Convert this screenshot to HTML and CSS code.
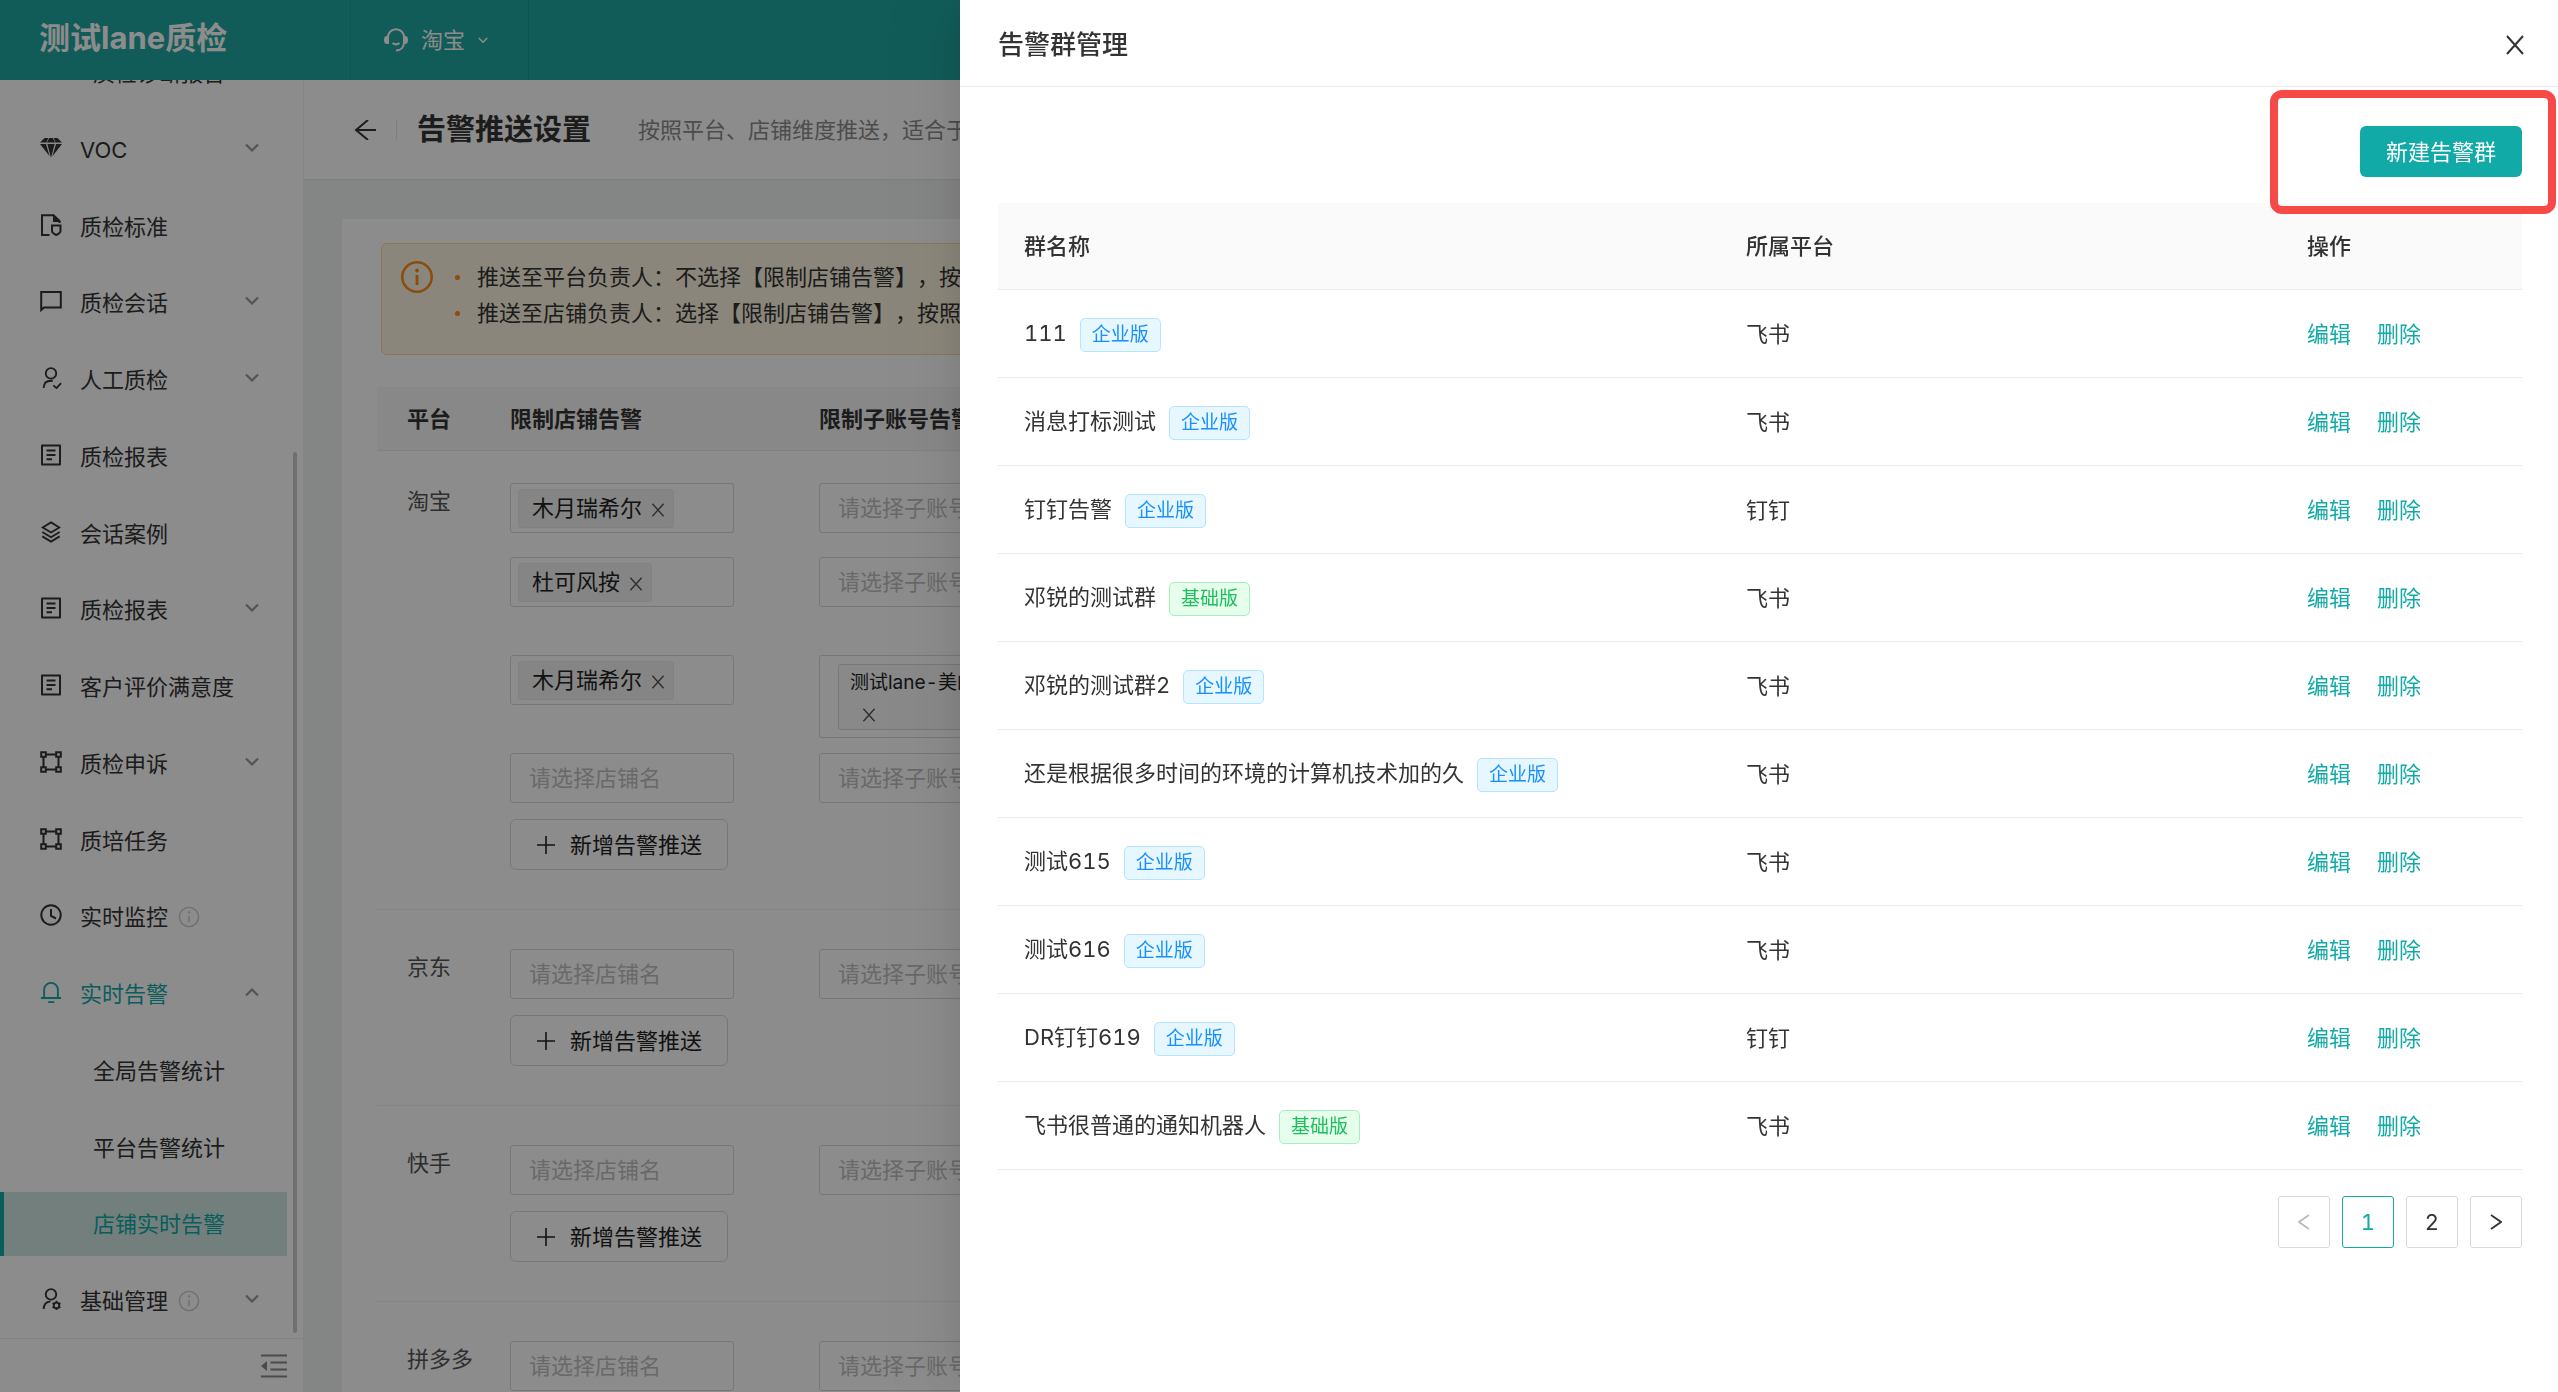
FILE: index.html
```html
<!DOCTYPE html>
<html lang="zh-CN">
<head>
<meta charset="utf-8">
<title>告警推送设置</title>
<link rel="stylesheet" href="styles.css">
</head>
<body>
<svg class="sprite" aria-hidden="true">
  <symbol id="down" viewBox="0 0 14 10"><path d="M1 1.500l6 6 6-6" fill="none" stroke="currentColor" stroke-width="2.200"/></symbol>
  <symbol id="up" viewBox="0 0 14 10"><path d="M1 8.500l6-6 6 6" fill="none" stroke="currentColor" stroke-width="2.200"/></symbol>
  <symbol id="report" viewBox="0 0 22 22"><path d="M2 1.500h18v19H2zM6.500 6.500h9M6.500 11h9M6.500 15.200h5.500" fill="none" stroke="currentColor" stroke-width="2" stroke-linejoin="round"/></symbol>
  <symbol id="frame" viewBox="0 0 22 22"><path d="M1.200 1.200h4.600v4.600H1.200zM16.200 1.200h4.600v4.600h-4.600zM1.200 16.200h4.600v4.600H1.200zM16.200 16.200h4.600v4.600h-4.600zM6 3.500h10M6 18.500h10M3.500 6v10M18.500 6v10" fill="none" stroke="currentColor" stroke-width="2"/></symbol>
  <symbol id="info" viewBox="0 0 24 24"><circle cx="12" cy="12" r="10.500" fill="none" stroke="currentColor" stroke-width="1.600"/><path d="M12 10.500v7" stroke="currentColor" stroke-width="1.700"/><circle cx="12" cy="7" r="1.300" fill="currentColor"/></symbol>
  <symbol id="cross" viewBox="0 0 20 20"><path d="M2 1l16 18M18 1L2 19" fill="none" stroke="currentColor" stroke-width="2"/></symbol>
  <symbol id="plus" viewBox="0 0 20 20"><path d="M10 1v18M1 10h18" fill="none" stroke="currentColor" stroke-width="1.600"/></symbol>
</svg>

<div class="app">
  <header class="topbar">
    <div class="brand">测试lane质检</div>
    <button class="platform" type="button">
      <svg class="headset" viewBox="0 0 24 24"><path d="M4 9.500C4 4.500 7.500 1.200 12 1.200s8 3.300 8 8.300V14c0 5-3 8.500-8 8.500" fill="none" stroke="currentColor" stroke-width="2"/><path d="M5 7.500v8.500H2.500C1 16 0 14.500 0 12s1-4 2.500-4zM19 7.500v8.500h2.500c1.500 0 2.500-1.500 2.500-4s-1-4-2.500-4z" fill="currentColor"/><path d="M8.500 15q3.500 2.800 7 0" fill="none" stroke="currentColor" stroke-width="2"/></svg>
      淘宝
      <svg class="tiny"><use href="#down"/></svg>
    </button>
  </header>

  <div class="layout">
    <aside class="sidebar">
      <nav class="nav">
        <ul class="menu">
          <li><a class="item sub" href="#">质检诊断报告</a></li>
          <li><a class="item" href="#"><svg class="icon" viewBox="0 0 24 22"><path d="M5 0h4L7 5H0zM10 0h4l2.500 5h-9zM15 0h4l5 5h-7zM0 6.500h6.500l4 13.500zM8 6.500h8L12 21.500zM17.500 6.500H24L13.500 20z" fill="currentColor"/></svg><span>VOC</span><svg class="arrow"><use href="#down"/></svg></a></li>
          <li><a class="item" href="#"><svg class="icon" viewBox="0 0 22 22"><path d="M9.500 21H2V1.200h11.500L19.500 7v2" fill="none" stroke="currentColor" stroke-width="2"/><path d="M13 0v8h8z" fill="currentColor"/><path d="M12 11.500h8.500v5.500q0 2-4.200 4-4.300-2-4.300-4z" fill="none" stroke="currentColor" stroke-width="2"/></svg><span>质检标准</span></a></li>
          <li><a class="item" href="#"><svg class="icon" viewBox="0 0 22 22"><path d="M1.200 20V2h19.600v15.500H4z" fill="none" stroke="currentColor" stroke-width="2"/></svg><span>质检会话</span><svg class="arrow"><use href="#down"/></svg></a></li>
          <li><a class="item" href="#"><svg class="icon" viewBox="0 0 22 24"><circle cx="11" cy="7" r="5.700" fill="none" stroke="currentColor" stroke-width="2"/><path d="M3 23c0-5 3-8 8-8h2M13.500 20l3.500 3 5-5.500" fill="none" stroke="currentColor" stroke-width="2"/></svg><span>人工质检</span><svg class="arrow"><use href="#down"/></svg></a></li>
          <li><a class="item" href="#"><svg class="icon"><use href="#report"/></svg><span>质检报表</span></a></li>
          <li><a class="item" href="#"><svg class="icon" viewBox="0 0 22 24"><path d="M11 1.500l9 5.500-9 5.500L2 7zM1.500 12l9.500 5.700 9.500-5.700M1.500 16.800L11 22.500l9.500-5.700" fill="none" stroke="currentColor" stroke-width="2"/></svg><span>会话案例</span></a></li>
          <li><a class="item" href="#"><svg class="icon"><use href="#report"/></svg><span>质检报表</span><svg class="arrow"><use href="#down"/></svg></a></li>
          <li><a class="item" href="#"><svg class="icon"><use href="#report"/></svg><span>客户评价满意度</span></a></li>
          <li><a class="item" href="#"><svg class="icon"><use href="#frame"/></svg><span>质检申诉</span><svg class="arrow"><use href="#down"/></svg></a></li>
          <li><a class="item" href="#"><svg class="icon"><use href="#frame"/></svg><span>质培任务</span></a></li>
          <li><a class="item" href="#"><svg class="icon" viewBox="0 0 22 22"><circle cx="11" cy="11" r="9.700" fill="none" stroke="currentColor" stroke-width="2"/><path d="M11 5v7l5 2.500" fill="none" stroke="currentColor" stroke-width="2"/></svg><span>实时监控</span><svg class="hint"><use href="#info"/></svg></a></li>
          <li><a class="item open" href="#"><svg class="icon" viewBox="0 0 22 24"><path d="M3.500 18v-8.500a7.500 7.500 0 0 1 15 0V18M0 18.500h22M8 23h6.500" fill="none" stroke="currentColor" stroke-width="2"/></svg><span>实时告警</span><svg class="arrow"><use href="#up"/></svg></a></li>
          <li><a class="item sub" href="#">全局告警统计</a></li>
          <li><a class="item sub" href="#">平台告警统计</a></li>
          <li><a class="item sub active" href="#">店铺实时告警</a></li>
          <li><a class="item" href="#"><svg class="icon" viewBox="0 0 22 24"><circle cx="11" cy="7" r="5.700" fill="none" stroke="currentColor" stroke-width="2"/><path d="M3 23c0-5 2.500-8 7.500-8.500" fill="none" stroke="currentColor" stroke-width="2"/><circle cx="17" cy="19" r="3" fill="none" stroke="currentColor" stroke-width="2"/><path d="M17 14v2M17 22v2M12.700 16.500l1.700 1M19.600 20.500l1.700 1M12.700 21.500l1.700-1M19.600 17.500l1.700-1" stroke="currentColor" stroke-width="2"/></svg><span>基础管理</span><svg class="hint"><use href="#info"/></svg><svg class="arrow"><use href="#down"/></svg></a></li>
        </ul>
        <div class="scrollbar"></div>
      </nav>
      <div class="sidebar-foot">
        <button class="fold" type="button" aria-label="收起菜单"><svg viewBox="0 0 26 24"><path d="M0 1.500h26M9.500 8.500H26M9.500 15.500H26M0 22.500h26" stroke="currentColor" stroke-width="2.200"/><path d="M0 12l6-5v10z" fill="currentColor"/></svg></button>
      </div>
    </aside>

    <main class="main">
      <div class="page-head">
        <button class="back" type="button" aria-label="返回"><svg viewBox="0 0 22 20"><path d="M14 0L2 10l12 10M2 10h20" fill="none" stroke="currentColor" stroke-width="2"/></svg></button>
        <h1>告警推送设置</h1>
        <p>按照平台、店铺维度推送，适合于多店铺</p>
      </div>
      <section class="card">
        <div class="alert">
          <svg class="alert-icon" viewBox="0 0 32 32"><circle cx="16" cy="16" r="14.700" fill="none" stroke="currentColor" stroke-width="2.600"/><path d="M16 14v10" stroke="currentColor" stroke-width="2.800"/><circle cx="16" cy="9.500" r="1.900" fill="currentColor"/></svg>
          <ul>
            <li>推送至平台负责人：不选择【限制店铺告警】，按照平台推送</li>
            <li>推送至店铺负责人：选择【限制店铺告警】，按照店铺推送</li>
          </ul>
        </div>
        <table class="rules">
          <thead><tr><th class="c-platform">平台</th><th class="c-shop">限制店铺告警</th><th>限制子账号告警</th></tr></thead>
          <tbody>
            <tr class="first">
              <td><span class="name">淘宝</span></td>
              <td><div class="stack">
                <div class="slot mid"><div class="picker"><span class="chip">木月瑞希尔<svg><use href="#cross"/></svg></span></div></div>
                <div class="slot tall"><div class="picker"><span class="chip">杜可风按<svg><use href="#cross"/></svg></span></div></div>
                <div class="slot tall"><div class="picker"><span class="chip">木月瑞希尔<svg><use href="#cross"/></svg></span></div></div>
                <div class="slot"><input class="picker" placeholder="请选择店铺名" aria-label="店铺名"></div>
                <button class="add" type="button"><svg><use href="#plus"/></svg>新增告警推送</button>
              </div></td>
              <td><div class="stack">
                <div class="slot mid"><input class="picker" placeholder="请选择子账号" aria-label="子账号"></div>
                <div class="slot tall"><input class="picker" placeholder="请选择子账号" aria-label="子账号"></div>
                <div class="slot tall"><div class="picker multi"><span class="chip wrap">测试lane-美的<svg><use href="#cross"/></svg></span></div></div>
                <div class="slot"><input class="picker" placeholder="请选择子账号" aria-label="子账号"></div>
              </div></td>
            </tr>
            <tr>
              <td><span class="name">京东</span></td>
              <td><div class="stack"><input class="picker" placeholder="请选择店铺名" aria-label="店铺名"><button class="add" type="button"><svg><use href="#plus"/></svg>新增告警推送</button></div></td>
              <td><input class="picker" placeholder="请选择子账号" aria-label="子账号"></td>
            </tr>
            <tr>
              <td><span class="name">快手</span></td>
              <td><div class="stack"><input class="picker" placeholder="请选择店铺名" aria-label="店铺名"><button class="add" type="button"><svg><use href="#plus"/></svg>新增告警推送</button></div></td>
              <td><input class="picker" placeholder="请选择子账号" aria-label="子账号"></td>
            </tr>
            <tr>
              <td><span class="name">拼多多</span></td>
              <td><input class="picker" placeholder="请选择店铺名" aria-label="店铺名"></td>
              <td><input class="picker" placeholder="请选择子账号" aria-label="子账号"></td>
            </tr>
          </tbody>
        </table>
      </section>
    </main>
  </div>
</div>

<div class="mask"></div>

<section class="drawer" role="dialog" aria-labelledby="drawer-title">
  <header class="drawer-head">
    <h2 id="drawer-title">告警群管理</h2>
    <button class="close" type="button" aria-label="关闭"><svg><use href="#cross"/></svg></button>
  </header>
  <div class="drawer-body">
    <div class="toolbar"><button class="primary" type="button">新建告警群</button></div>
    <table class="groups">
      <thead><tr><th class="g-name">群名称</th><th class="g-platform">所属平台</th><th>操作</th></tr></thead>
      <tbody>
        <tr><td>111<span class="tag">企业版</span></td><td>飞书</td><td><a href="#">编辑</a><a href="#">删除</a></td></tr>
        <tr><td>消息打标测试<span class="tag">企业版</span></td><td>飞书</td><td><a href="#">编辑</a><a href="#">删除</a></td></tr>
        <tr><td>钉钉告警<span class="tag">企业版</span></td><td>钉钉</td><td><a href="#">编辑</a><a href="#">删除</a></td></tr>
        <tr><td>邓锐的测试群<span class="tag green">基础版</span></td><td>飞书</td><td><a href="#">编辑</a><a href="#">删除</a></td></tr>
        <tr><td>邓锐的测试群2<span class="tag">企业版</span></td><td>飞书</td><td><a href="#">编辑</a><a href="#">删除</a></td></tr>
        <tr><td>还是根据很多时间的环境的计算机技术加的久<span class="tag">企业版</span></td><td>飞书</td><td><a href="#">编辑</a><a href="#">删除</a></td></tr>
        <tr><td>测试615<span class="tag">企业版</span></td><td>飞书</td><td><a href="#">编辑</a><a href="#">删除</a></td></tr>
        <tr><td>测试616<span class="tag">企业版</span></td><td>飞书</td><td><a href="#">编辑</a><a href="#">删除</a></td></tr>
        <tr><td>DR钉钉619<span class="tag">企业版</span></td><td>钉钉</td><td><a href="#">编辑</a><a href="#">删除</a></td></tr>
        <tr><td>飞书很普通的通知机器人<span class="tag green">基础版</span></td><td>飞书</td><td><a href="#">编辑</a><a href="#">删除</a></td></tr>
      </tbody>
    </table>
    <nav class="pager" aria-label="分页">
      <button type="button" disabled aria-label="上一页"><svg viewBox="0 0 12 16"><path d="M11 1L1 8l10 7" fill="none" stroke="currentColor" stroke-width="1.800"/></svg></button>
      <button type="button" class="current">1</button>
      <button type="button">2</button>
      <button type="button" aria-label="下一页"><svg viewBox="0 0 12 16"><path d="M1 1l10 7-10 7" fill="none" stroke="currentColor" stroke-width="1.800"/></svg></button>
    </nav>
  </div>
  <div class="highlight"></div>
</section>
</body>
</html>
```

FILE: styles.css
```css
* { box-sizing: border-box; }

body {
  margin: 0;
  color: #333;
  font: 22px/36px Inter, "Noto Sans CJK SC", sans-serif;
  font-variant-numeric: tabular-nums;
  text-spacing-trim: space-all;
}

button, input { font: inherit; color: inherit; margin: 0; }
button { background: none; border: 0; padding: 0; }
a { color: inherit; text-decoration: none; }
ul { list-style: none; margin: 0; padding: 0; }
h1, h2, p { margin: 0; }
svg { flex: none; display: block; }
table { border-collapse: separate; border-spacing: 0; table-layout: fixed; width: 100%; }
th { text-align: left; font-weight: 500; }
.sprite { position: absolute; width: 0; height: 0; }

/* shell */
.app { display: flex; flex-direction: column; height: 100vh; overflow: hidden; }
.topbar { display: flex; flex: none; height: 80px; background: #1fa7a2; color: #fff; position: relative; z-index: 1; }
.brand { width: 351px; padding-left: 39px; font-size: 31px; font-weight: 700; line-height: 76px; border-right: 1px solid #1a9a95; }
.platform { display: flex; align-items: center; gap: 13px; width: 178px; padding-left: 33px; border-right: 1px solid #1a9a95; }
.headset { width: 24px; height: 24px; }
.tiny { width: 10px; height: 7px; }
.layout { display: flex; flex: 1; min-height: 0; }

/* sidebar */
.sidebar { display: flex; flex-direction: column; flex: none; width: 304px; border-right: 1px solid #f0f0f0; background: #fff; }
.nav { position: relative; flex: 1; min-height: 0; overflow: hidden; border-bottom: 1px solid #eee; }
.menu { display: flex; flex-direction: column; justify-content: space-between; height: calc(100% + 34px); margin-top: -39px; width: 287px; }
.item { display: flex; align-items: center; height: 64px; padding: 0 28px 0 40px; }
.icon { width: 22px; height: 22px; margin: 0 18px 4px 0; }
.arrow { width: 14px; height: 10px; margin: 0 0 4px auto; color: #999; }
.hint { width: 22px; height: 22px; margin-left: 10px; color: #ccc; }
.open { color: #12aaa7; }
.sub { padding-left: 93px; }
.active { padding-left: 89px; border-left: 4px solid #12aaa7; background: #d0e8e4; color: #12aaa7; }
.scrollbar { position: absolute; right: 6px; bottom: 5px; width: 4px; height: 70%; border-radius: 2px; background: #ccc; }
.sidebar-foot { display: flex; justify-content: flex-end; align-items: center; height: 53px; padding-right: 16px; color: #888; }
.fold svg { width: 26px; height: 24px; }

/* page */
.main { flex: 1; min-width: 0; background: #f1f2f2; overflow: hidden; }
.page-head { display: flex; align-items: center; height: 100px; padding-left: 50px; border-bottom: 1px solid #e4e4e4; background: #fff; white-space: nowrap; }
.back svg { width: 22px; height: 20px; }
.page-head h1 { margin: 0 47px 0 20px; font-size: 29px; font-weight: 700; }
.page-head h1::before { content: ""; display: inline-block; width: 1px; height: 20px; margin-right: 20px; background: #e4e4e4; }
.page-head p { color: #8c8c8c; }
.card { margin: 39px 38px 0; padding: 24px 35px; background: #fff; }

.alert { display: flex; margin-left: 4px; height: 112px; padding: 15px 19px; border: 1px solid #ffd899; border-radius: 6px; background: #fdf5e0; white-space: nowrap; overflow: hidden; }
.alert-icon { width: 32px; height: 32px; margin: 2px 22px 0 0; color: #fa8c16; }
.alert li { display: flex; align-items: center; }
.alert li::before { content: ""; width: 5px; height: 5px; margin-right: 17px; border-radius: 50%; background: #fa8c16; }

.rules { margin-top: 32px; }
.rules th { height: 64px; padding: 0 0 0 30px; border-bottom: 1px solid #eaeaea; background: #f8f8f8; font-weight: 700; white-space: nowrap; }
.c-platform { width: 103px; }
.c-shop { width: 309px; }
.rules td { padding: 39px 0 39px 30px; border-bottom: 1px solid #f0f0f0; vertical-align: top; color: #555; }
.rules .first td { padding-top: 32px; }
.name { white-space: nowrap; }
.stack { display: flex; flex-direction: column; align-items: flex-start; gap: 16px; }
.slot { display: flex; align-items: flex-start; height: 50px; width: 100%; }
.mid { height: 58px; }
.tall { height: 82px; }
.picker { display: flex; align-items: center; width: 224px; height: 50px; padding: 0 18px; border: 1px solid #d9d9d9; border-radius: 3px; background: #fff; }
.picker::placeholder { color: #bfbfbf; opacity: 1; }
div.picker { padding: 0 7px; }
.picker.multi { height: 83px; padding: 0 18px; }
.chip { display: flex; align-items: center; gap: 9px; height: 39px; padding: 0 8px 0 13px; border: 1px solid #ececec; border-radius: 3px; background: #f3f3f3; color: #222; white-space: nowrap; }
.chip svg { width: 14px; height: 14px; margin-top: 4px; color: #555; }
.chip.wrap { flex-direction: column; align-items: flex-start; gap: 0; width: 186px; height: 66px; padding: 0 11px; border-color: #d9d9d9; background: #fafafa; font-size: 19px; overflow: hidden; }
.chip.wrap svg { margin: 7px 12px; }
.add { display: flex; align-items: center; gap: 14px; height: 51px; padding: 0 25px; border: 1px solid #d9d9d9; border-radius: 6px; color: #222; white-space: nowrap; }
.add svg { width: 20px; height: 20px; }

/* drawer */
.mask { position: fixed; inset: 0; z-index: 2; background: rgba(0, 0, 0, .45); }
.drawer {
  position: fixed; inset: 0 0 0 auto; z-index: 3; width: 1598px; max-width: 100%; background: #fff;
  box-shadow: -10px 0 26px -13px rgba(0, 0, 0, .08), -14px 0 45px rgba(0, 0, 0, .05), -19px 0 77px 26px rgba(0, 0, 0, .03);
}
.drawer-head { display: flex; justify-content: space-between; align-items: center; height: 87px; padding: 3px 33px 0 38px; border-bottom: 1px solid #ebebeb; }
.drawer-head h2 { font-size: 26px; font-weight: 500; }
.close svg { width: 20px; height: 20px; }
.drawer-body { padding: 39px 36px 0 38px; }
.toolbar { display: flex; justify-content: flex-end; margin-bottom: 26px; }
.primary { height: 51px; padding: 0 26px; border-radius: 6px; background: #12aaa7; color: #fff; }
.groups th, .groups td { height: 88px; padding: 0 26px; border-bottom: 1px solid #ebebeb; }
.groups th { height: 87px; background: #fafafa; }
.groups th:first-child { border-top-left-radius: 5px; }
.groups th:last-child { border-top-right-radius: 5px; }
.g-name { width: 722px; }
.g-platform { width: 561px; }
.groups a { margin-right: 26px; color: #12aaa7; }
.tag { display: inline-block; margin-left: 13px; padding: 0 11px; border: 1px solid #b5e4ff; border-radius: 5px; background: #e6f7ff; color: #1890ff; font-size: 19px; line-height: 32px; }
.green { border-color: #a6f0bd; background: #e6ffed; color: #1cbf5c; }
.pager { display: flex; justify-content: flex-end; gap: 12px; margin-top: 26px; }
.pager button { display: grid; place-items: center; width: 52px; height: 52px; border: 1px solid #d9d9d9; border-radius: 3px; }
.pager svg { width: 12px; height: 16px; }
.pager :disabled { color: #bbb; }
.pager .current { border-color: #12aaa7; color: #12aaa7; }

/* callout over the create button */
.highlight { position: absolute; top: 90px; right: 2px; width: 286px; height: 124px; border: 8px solid #f74a46; border-radius: 12px; pointer-events: none; }
```
